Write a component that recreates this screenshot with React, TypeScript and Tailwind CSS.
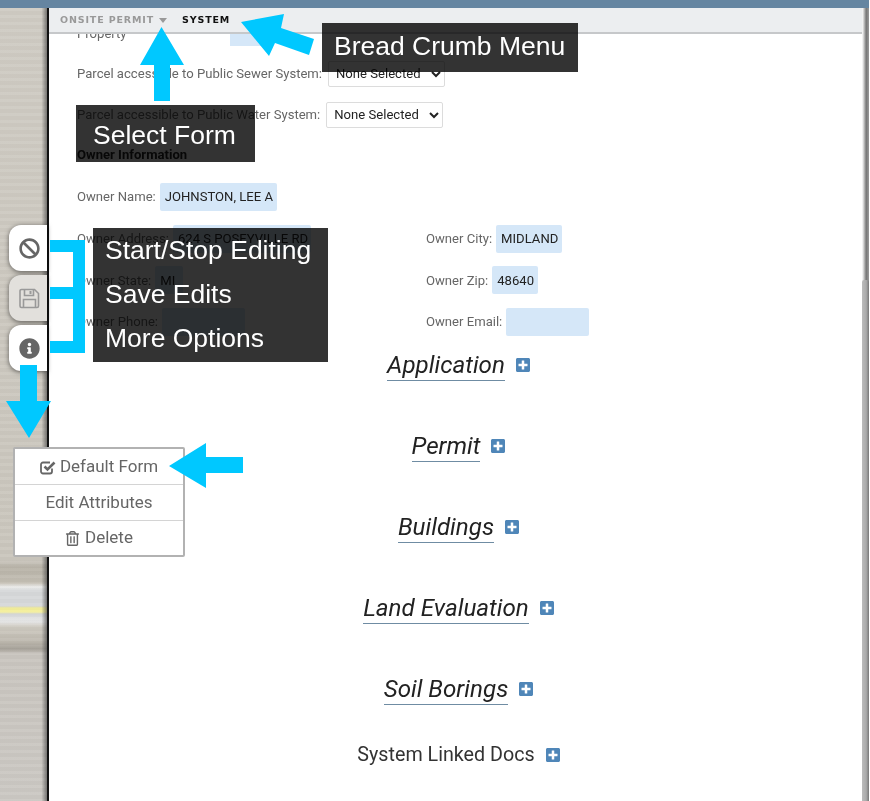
import { FaBan, FaInfoCircle, FaPlusSquare, FaRegTrashAlt } from "react-icons/fa";

const sections = ["Application", "Permit", "Buildings", "Land Evaluation", "Soil Borings"];

function Field({ label, value, width }: { label: string; value: string; width: string }) {
  return (
    <div className="flex h-7 items-center gap-[4px]">
      <span className="whitespace-nowrap text-[#666]">{label}</span>
      <span className={`flex h-7 items-center whitespace-nowrap rounded-[2px] bg-[#d5e7f8] px-[5px] text-[#222] ${width}`}>
        {value}
      </span>
    </div>
  );
}

function YesNoSelect() {
  return (
    <select
      defaultValue="none"
      className="h-[26px] w-[117px] rounded-[2px] border border-[#dcdcdc] bg-white pl-[3px] text-[13.1px] text-[#222]"
    >
      <option value="none">None Selected</option>
    </select>
  );
}

function SectionTitle({ title }: { title: string }) {
  return (
    <div className="flex h-[81px] items-start justify-center gap-[10px] pl-[7px] pt-[8.500px]">
      <h3 className="border-b border-[#6f8ca3] text-[24.200px] leading-[30px] text-[#222] italic">{title}</h3>
      <FaPlusSquare className="mt-[7px] text-[16px] text-[#4f86b8]" />
    </div>
  );
}

function ToolButton({ children, muted }: { children: React.ReactNode; muted?: boolean }) {
  return (
    <div
      className={`flex h-[46px] w-[38px] items-center justify-center rounded-l-[12px] pl-[3px] text-[21px] shadow-[0_1px_5px_rgba(0,0,0,0.55)] ${
        muted ? "bg-[#e2e0dc] text-[#999]" : "bg-white text-[#666]"
      }`}
    >
      {children}
    </div>
  );
}

function Callout({ children, className }: { children: React.ReactNode; className: string }) {
  return (
    <div className={`absolute font-['Liberation_Sans',sans-serif] text-[26.5px] text-white ${className}`}>
      <div className="absolute inset-0 bg-[#333333] mix-blend-multiply" />
      <div className="relative">{children}</div>
    </div>
  );
}

// floppy-o, the package's save icon has a different body
function SaveIcon() {
  return (
    <svg width="21" height="21" viewBox="0 0 21 21" fill="none" stroke="currentColor" strokeWidth="1.6">
      <path d="M2.5 1.5h13l4 4v12.5a1.5 1.5 0 0 1-1.5 1.5h-15.500a1.500 1.500 0 0 1-1.500-1.500v-15a1.500 1.500 0 0 1 1.500-1.500z" />
      <path d="M5.500 1.500v6h9v-6" />
      <path d="M11.500 3v3" strokeWidth="2" />
      <path d="M4.500 19.500v-8h12v8" />
    </svg>
  );
}

// check-square-o, the tick runs out past the box
function CheckSquareIcon() {
  return (
    <svg width="16" height="15" viewBox="0 0 16 15" fill="none" stroke="currentColor" className="shrink-0">
      <path d="M12 8.500v3a2 2 0 0 1-2 2H3a2 2 0 0 1-2-2V4.500a2 2 0 0 1 2-2h7" strokeWidth="1.800" />
      <path d="M4.500 6.500l3 3 7-7" strokeWidth="2.600" />
    </svg>
  );
}

export default function App() {
  return (
    <div className="relative flex h-[801px] w-[870px] flex-col overflow-hidden bg-white font-['Roboto',sans-serif] text-[13.1px]">
      <div className="h-2 w-[869px] shrink-0 bg-[#6585a1]" />

      <div className="flex min-h-0 w-[869px] flex-1">
        {/* Road picture behind the panel */}
        <div className="w-[47px] shrink-0 bg-[linear-gradient(to_right,transparent_88%,rgba(70,70,70,0.65)_100%),repeating-linear-gradient(to_bottom,rgba(255,255,255,0.05)_0_3px,rgba(0,0,0,0.015)_3px_7px),linear-gradient(to_bottom,#cfcbc3_0,#cac6bd_552px,#b8b3a8_560px,#c4bfb4_575px,#f1f1f0_579px,#d6d8d9_582px,#d6d8d9_598px,#f3ee9a_600px,#f3ee9a_604px,#d6d8d9_606px,#e8e8e8_614px,#cfcbc2_618px,#bdb8ae_634px,#a5a097_640px,#c9c5bf_646px,#cbc8c3_793px)]" />
        <div className="w-[2px] shrink-0 bg-[#111]" />

        <main className="relative isolate min-w-0 flex-1 overflow-hidden">
          {/* Breadcrumb bar */}
          <div className="absolute inset-x-0 top-0 z-10 flex h-[26px] items-center border-b-2 border-[#c6c8ca] bg-[#eceef0] pl-[11px] font-['DejaVu_Sans',sans-serif] text-[9.500px] font-bold tracking-[0.09em]">
            <span className="text-[#999]">ONSITE PERMIT</span>
            <span className="ml-[5px] mt-[1px] h-0 w-0 border-x-4 border-t-[5px] border-x-transparent border-t-[#999]" />
            <span className="ml-[15px] text-[#111]">SYSTEM</span>
          </div>

          <div className="flex flex-col pl-[28px] pt-[12px]">
            <div className="flex h-7 items-center">
              <span className="w-[153px] text-[#666]">Property</span>
              <span className="h-6 w-[42px] bg-[#d5e7f8]" />
            </div>
            <div className="mt-[12px] flex h-[27px] items-center gap-[6px]">
              <span className="text-[#666]">Parcel accessible to Public Sewer System:</span>
              <YesNoSelect />
            </div>
            <div className="mt-[14px] flex h-[27px] items-center gap-[6px]">
              <span className="text-[#666]">Parcel accessible to Public Water System:</span>
              <YesNoSelect />
            </div>
            <h4 className="mt-[18px] h-[18px] font-bold leading-[18px] text-[#222]">Owner Information</h4>

            <div className="mt-[19px] flex flex-col gap-[13.700px]">
              <Field label="Owner Name:" value="JOHNSTON, LEE A" width="w-[117px]" />
              <div className="grid grid-cols-[349px_auto]">
                <Field label="Owner Address:" value="624 S POSEYVILLE RD" width="w-[138px]" />
                <Field label="Owner City:" value="MIDLAND" width="w-[66px]" />
              </div>
              <div className="grid grid-cols-[349px_auto]">
                <Field label="Owner State:" value="MI" width="w-[28px]" />
                <Field label="Owner Zip:" value="48640" width="w-[46px]" />
              </div>
              <div className="grid grid-cols-[349px_auto]">
                <Field label="Owner Phone:" value="" width="w-[83px]" />
                <Field label="Owner Email:" value="" width="w-[83px]" />
              </div>
            </div>

            <div className="-ml-[28px] mt-[5px] flex flex-col">
              {sections.map((title) => (
                <SectionTitle key={title} title={title} />
              ))}
              <div className="-mt-[6px] flex items-center justify-center gap-[10px] pl-[7px] text-[19.700px] leading-[30px] text-[#333]">
                <span>System Linked Docs</span>
                <FaPlusSquare className="text-[16px] text-[#4f86b8]" />
              </div>
            </div>
          </div>
        </main>

        {/* Scrollbar */}
        <div className="flex w-[7px] shrink-0 flex-col bg-[linear-gradient(to_right,#fff_0,#d8d8d8_20%,#777_60%,#999_100%)]">
          <div className="mt-[272px] flex-1 rounded-t-[2px] bg-[linear-gradient(to_right,#bbb_0,#aaa_60%,#777_100%)]" />
        </div>
      </div>

      {/* Floating edit tools */}
      <div className="absolute left-[9px] top-[225px] flex flex-col gap-[4px]">
        <ToolButton>
          <FaBan />
        </ToolButton>
        <ToolButton muted>
          <SaveIcon />
        </ToolButton>
        <ToolButton>
          <FaInfoCircle />
        </ToolButton>
      </div>

      {/* Options menu */}
      <div className="absolute left-[13px] top-[447px] flex h-[110px] w-[172px] flex-col divide-y divide-[#d4d4d4] rounded-[2px] border-2 border-[#b2b2b2] bg-white text-[17px] text-[#666]">
        <div className="flex flex-1 items-center justify-center gap-[4px] pt-[1px]">
          <CheckSquareIcon />
          Default Form
        </div>
        <div className="flex flex-1 items-center justify-center pt-[1px]">Edit Attributes</div>
        <div className="flex flex-1 items-center justify-center gap-[5px]">
          <FaRegTrashAlt className="text-[15px]" />
          Delete
        </div>
      </div>

      {/* Annotation arrows */}
      <svg className="pointer-events-none absolute left-0 top-0" width="870" height="801" viewBox="0 0 870 801" fill="#00c8ff">
        <polygon points="161.500,27 184,65 170,65 170,101 154,101 154,65 140,65" />
        <polygon points="241,22 284,14 281,28 314,39 309,55 275,43 269,56" />
        <rect x="50" y="240" width="35" height="12" />
        <rect x="73" y="240" width="12" height="113" />
        <rect x="50" y="287" width="35" height="12" />
        <rect x="50" y="341" width="35" height="12" />
        <polygon points="20,365 37,365 37,401 51,401 29,438 6,401 20,401" />
        <polygon points="169,466 206,443 206,457 243,457 243,473 206,473 206,488" />
      </svg>

      <Callout className="left-[322px] top-[23px] flex h-[49px] w-[256px] items-center pl-[12px] pb-[2px]">Bread Crumb Menu</Callout>
      <Callout className="left-[76px] top-[105px] flex h-[57px] w-[179px] items-center pl-[17px] pt-[4px]">Select Form</Callout>
      <Callout className="left-[93px] top-[228px] flex h-[134px] w-[235px] flex-col justify-center pl-[12px] pb-[2px] leading-[44px]">
        <span className="block">Start/Stop Editing</span>
        <span className="block">Save Edits</span>
        <span className="block">More Options</span>
      </Callout>
    </div>
  );
}
